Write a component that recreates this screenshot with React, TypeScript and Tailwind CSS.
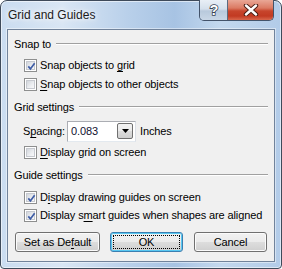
import type { ReactNode } from "react"

function CheckBox({ checked }: { checked?: boolean }) {
  return (
    <span className="w-[13px] h-[13px] shrink-0 border border-[#8e8f8f] bg-white p-[1px] flex">
      <span className="relative flex-1 border border-[#c6c9cf] bg-[linear-gradient(135deg,#d2d6dc_0%,#eceef1_60%,#f8f8f9_100%)]">
        {checked && (
          <svg className="absolute -left-[2px] -top-[2px]" width="13" height="13" viewBox="0 0 13 13">
            <path d="M3.3 6.4 L5.4 8.9 L9.6 3.2" fill="none" stroke="#3e5da6" strokeWidth="1.7" />
          </svg>
        )}
      </span>
    </span>
  )
}

function CheckRow({ checked, children, className }: { checked?: boolean; children: ReactNode; className: string }) {
  return (
    <div className={`flex items-center h-[17px] pl-[16px] gap-[3px] ${className}`}>
      <CheckBox checked={checked} />
      <span className="leading-none">{children}</span>
    </div>
  )
}

function Heading({ label, className }: { label: string; className: string }) {
  return (
    <div className={`flex items-center h-[14px] pl-[6px] pr-[6px] gap-[5px] ${className}`}>
      <span className="leading-none">{label}</span>
      <span className="flex-1 h-[2px] border-t border-[#a0a0a0] border-b-white border-b" />
    </div>
  )
}

function Btn({ children, width, focused }: { children: ReactNode; width: string; focused?: boolean }) {
  return (
    <div
      className={`relative h-[20px] ${width} rounded-[3px] border flex items-center justify-center bg-[linear-gradient(180deg,#f2f2f2_0%,#ebebeb_48%,#dddddd_52%,#cfcfcf_100%)] ${
        focused
          ? "border-[#3c7fb1] shadow-[inset_0_0_0_1px_#58c8f2]"
          : "border-[#707070] shadow-[inset_0_0_0_1px_#fbfbfb]"
      }`}
    >
      {focused && <span className="absolute inset-[2px] border border-dotted border-black" />}
      <span className="leading-none">{children}</span>
    </div>
  )
}

export default function App() {
  return (
    <div className="w-[282px] h-[269px] bg-white font-['Liberation_Sans',Arial,sans-serif]">
      <div className="w-full h-full flex flex-col rounded-t-[7px] rounded-b-[4px] border border-[#3e4a5a] px-[6px] bg-[linear-gradient(90deg,#cadcf0_0%,#d9e6f4_22%,#b9d0ea_45%,#a7c3e3_62%,#c3d8ee_78%,#b2cbe8_100%)] shadow-[inset_0_0_0_1px_rgba(255,255,255,0.55)]">
        <div className="h-[28px] flex items-start justify-between">
          <span className="pl-[1px] pt-[8px] text-[12px] leading-none text-[#1b1b1b] [text-shadow:0_0_8px_#fff,0_0_4px_#fff]">
            Grid and Guides
          </span>
          <div className="-mt-[1px] mr-[1px] flex h-[21px] rounded-b-[5px] border border-t-0 border-[#43536a] overflow-hidden">
            <div className="w-[28px] flex items-center justify-center border-r border-[#5c6b80] bg-[linear-gradient(180deg,#e9eff6_0%,#d5e0ec_45%,#b8c9dc_55%,#c9d7e6_100%)]">
              <svg width="12" height="14" viewBox="0 0 12 14">
                <text x="6" y="12" textAnchor="middle" fontFamily="Liberation Sans, Arial, sans-serif" fontWeight="bold" fontSize="14" fill="#fff" stroke="#3a4656" strokeWidth="1.6" paintOrder="stroke">?</text>
              </svg>
            </div>
            <div className="w-[45px] flex items-center justify-center bg-[linear-gradient(180deg,#e9a796_0%,#db7a63_40%,#c7452c_55%,#c23a22_80%,#d8674c_100%)]">
              <svg width="16" height="12" viewBox="0 0 16 12">
                <path d="M3 1.5 L13 10.5 M13 1.5 L3 10.5" stroke="#4a1d14" strokeWidth="4.4" strokeLinecap="round" />
                <path d="M3 1.5 L13 10.5 M13 1.5 L3 10.5" stroke="#fff" strokeWidth="2.4" strokeLinecap="round" />
              </svg>
            </div>
          </div>
        </div>

        <div className="h-[233px] flex flex-col border border-[#71839b] bg-[#f0f0f0] text-[11px] tracking-[-0.12px] text-black shadow-[0_0_0_1px_rgba(255,255,255,0.45)]">
          <Heading label="Snap to" className="mt-[7px]" />
          <CheckRow checked className="mt-[6px]">
            Snap objects to <u className="underline-offset-[2px]">g</u>rid
          </CheckRow>
          <CheckRow className="mt-[2px]">
            <u className="underline-offset-[2px]">S</u>nap objects to other objects
          </CheckRow>

          <Heading label="Grid settings" className="mt-[7px]" />
          <div className="mt-[7px] flex items-center h-[21px] pl-[15px]">
            <span className="leading-none w-[44px]">
              S<u className="underline-offset-[2px]">p</u>acing:
            </span>
            <div className="w-[69px] h-[21px] border border-[#abadb3] border-b-[#e3e9ef] border-r-[#dbdfe6] bg-white flex items-start">
              <span className="flex-1 pl-[3px] pt-[4px] leading-none text-[#101030]">0.083</span>
              <span className="mt-[1px] mr-[2px] w-[16px] h-[16px] rounded-[2px] border border-[#707070] bg-[linear-gradient(180deg,#f2f2f2_0%,#ebebeb_48%,#dddddd_52%,#cfcfcf_100%)] flex items-center justify-center">
                <svg width="7" height="4" viewBox="0 0 7 4">
                  <path d="M0 0 H7 L3.5 4 Z" fill="#000" />
                </svg>
              </span>
            </div>
            <span className="leading-none ml-[4px]">Inches</span>
          </div>
          <CheckRow className="mt-[2px]">
            <u className="underline-offset-[2px]">D</u>isplay grid on screen
          </CheckRow>

          <Heading label="Guide settings" className="mt-[7px]" />
          <CheckRow checked className="mt-[7px]">
            D<u className="underline-offset-[2px]">i</u>splay drawing guides on screen
          </CheckRow>
          <CheckRow checked className="mt-[1px]">
            Display s<u className="underline-offset-[2px]">m</u>art guides when shapes are aligned
          </CheckRow>

          <div className="mt-[8px] flex pl-[7px]">
            <Btn width="w-[85px]">
              Set as De<u className="underline-offset-[2px]">f</u>ault
            </Btn>
            <div className="ml-[10px]">
              <Btn width="w-[73px]" focused>
                OK
              </Btn>
            </div>
            <div className="ml-[11px]">
              <Btn width="w-[73px]">Cancel</Btn>
            </div>
          </div>
        </div>
      </div>
    </div>
  )
}
